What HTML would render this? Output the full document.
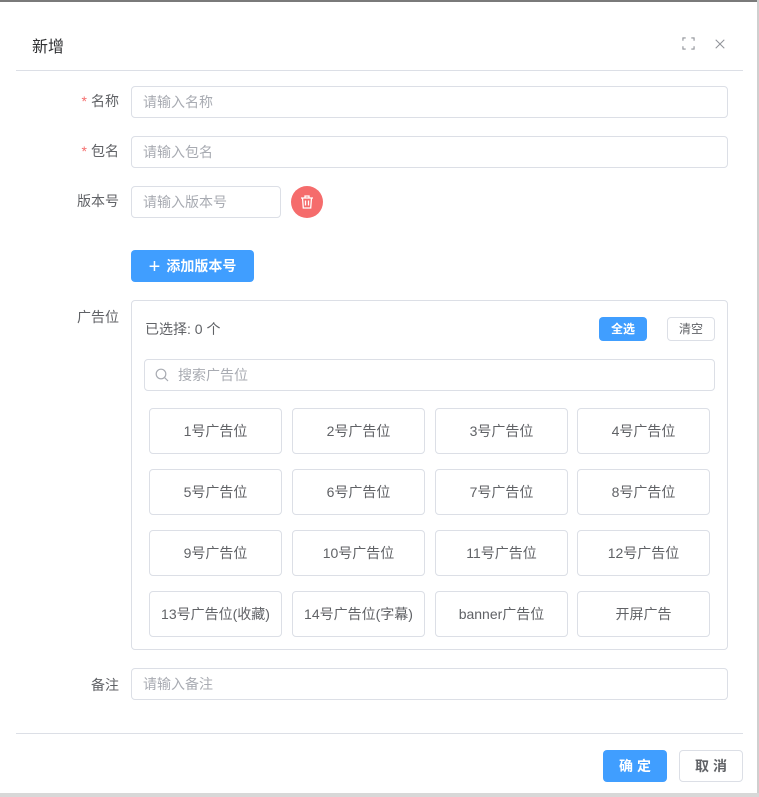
<!DOCTYPE html>
<html><head><meta charset="utf-8"><style>
*{box-sizing:border-box;margin:0;padding:0}
body{width:759px;height:797px;background:#fff;font-family:"Liberation Sans","Noto Sans CJK SC",sans-serif;position:relative;overflow:hidden;color:#606266;font-size:14px}
.a{position:absolute}
.top{left:0;top:0;width:759px;height:2px;background:#7a7a7a}
.bot{left:0;top:793px;width:759px;height:4px;background:#d8d8d8}
.rt{left:757px;top:0;width:2px;height:797px;background:#cfcfcf}
.hr{height:1px;background:#dcdfe6}
.lab{width:100px;text-align:right;left:19px;font-size:14px;color:#606266}
.req{color:#f56c6c;margin-right:4px}
.inp{border:1px solid #dcdfe6;border-radius:4px;height:32px;line-height:30px;padding-left:11px;color:#a8abb2;font-size:14px}
.cell{border:1px solid #dcdfe6;border-radius:4px;width:133px;height:46px;line-height:44px;text-align:center;color:#606266;font-size:14px}
.btnp{background:#409eff;color:#fff;border-radius:4px;text-align:center;font-weight:bold}
</style></head><body>
<div class="a top"></div><div class="a rt"></div><div class="a bot"></div>
<div class="a" style="left:32px;top:33px;font-size:16px;color:#303133">新增</div>
<svg class="a" style="left:682px;top:37px" width="13" height="13" viewBox="0 0 14 14" fill="none" stroke="#909399" stroke-width="1.2"><path d="M1 4V1h3M10 1h3v3M13 10v3h-3M4 13H1v-3"/></svg>
<svg class="a" style="left:714px;top:38px" width="12" height="12" viewBox="0 0 14 14" stroke="#909399" stroke-width="1.2"><path d="M2 2l10 10M12 2L2 12"/></svg>
<div class="a hr" style="left:16px;top:70px;width:727px"></div>

<div class="a lab" style="top:91px"><span class="req">*</span>名称</div>
<div class="a inp" style="left:131px;top:86px;width:597px">请输入名称</div>
<div class="a lab" style="top:141px"><span class="req">*</span>包名</div>
<div class="a inp" style="left:131px;top:136px;width:597px">请输入包名</div>
<div class="a lab" style="top:191px">版本号</div>
<div class="a inp" style="left:131px;top:186px;width:150px">请输入版本号</div>
<div class="a" style="left:291px;top:186px;width:32px;height:32px;border-radius:50%;background:#f56c6c"></div>
<svg class="a" style="left:299px;top:194px" width="16" height="16" viewBox="0 0 16 16" fill="none" stroke="#fff" stroke-width="1.3"><path d="M2 4h12M6 4V2h4v2M3.5 4l.8 10h7.4l.8-10M6.5 6.5v5M9.5 6.5v5"/></svg>
<div class="a btnp" style="left:131px;top:250px;width:123px;height:32px;line-height:32px;font-size:14px"><span style="font-weight:normal;font-size:20px;vertical-align:-2px;margin-right:6px">+</span>添加版本号</div>

<div class="a lab" style="top:307px">广告位</div>
<div class="a" style="left:131px;top:300px;width:597px;height:350px;border:1px solid #dcdfe6;border-radius:4px"></div>
<div class="a" style="left:145px;top:319px;color:#606266">已选择: 0 个</div>
<div class="a btnp" style="left:599px;top:317px;width:48px;height:24px;line-height:24px;font-size:12px">全选</div>
<div class="a" style="left:667px;top:317px;width:48px;height:24px;line-height:22px;font-size:12px;border:1px solid #dcdfe6;border-radius:4px;text-align:center;color:#606266">清空</div>
<div class="a inp" style="left:144px;top:359px;width:571px;height:32px;padding-left:33px">搜索广告位</div>
<svg class="a" style="left:155px;top:368px" width="14" height="14" viewBox="0 0 14 14" fill="none" stroke="#a8abb2" stroke-width="1.2"><circle cx="6" cy="6" r="4.8"/><path d="M9.5 9.5L13 13"/></svg>

<div class="a cell" style="left:149px;top:408px">1号广告位</div>
<div class="a cell" style="left:292px;top:408px">2号广告位</div>
<div class="a cell" style="left:435px;top:408px">3号广告位</div>
<div class="a cell" style="left:577px;top:408px">4号广告位</div>
<div class="a cell" style="left:149px;top:469px">5号广告位</div>
<div class="a cell" style="left:292px;top:469px">6号广告位</div>
<div class="a cell" style="left:435px;top:469px">7号广告位</div>
<div class="a cell" style="left:577px;top:469px">8号广告位</div>
<div class="a cell" style="left:149px;top:530px">9号广告位</div>
<div class="a cell" style="left:292px;top:530px">10号广告位</div>
<div class="a cell" style="left:435px;top:530px">11号广告位</div>
<div class="a cell" style="left:577px;top:530px">12号广告位</div>
<div class="a cell" style="left:149px;top:591px">13号广告位(收藏)</div>
<div class="a cell" style="left:292px;top:591px">14号广告位(字幕)</div>
<div class="a cell" style="left:435px;top:591px">banner广告位</div>
<div class="a cell" style="left:577px;top:591px">开屏广告</div>

<div class="a lab" style="top:675px">备注</div>
<div class="a inp" style="left:131px;top:668px;width:597px">请输入备注</div>

<div class="a hr" style="left:16px;top:733px;width:727px"></div>
<div class="a btnp" style="left:603px;top:750px;width:64px;height:32px;line-height:32px;letter-spacing:4px;padding-left:4px">确定</div>
<div class="a" style="left:679px;top:750px;width:64px;height:32px;line-height:30px;border:1px solid #dcdfe6;border-radius:4px;text-align:center;font-weight:bold;letter-spacing:4px;padding-left:4px;color:#606266">取消</div>
</body></html>
